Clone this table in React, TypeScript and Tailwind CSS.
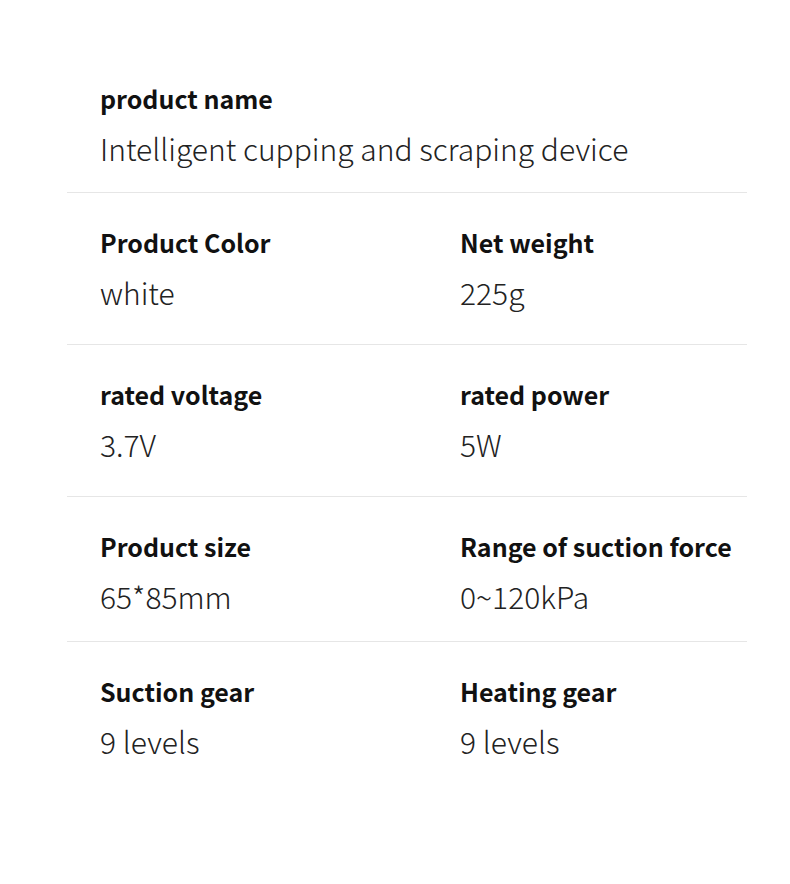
import React from "react";

const font = { fontFamily: '"Noto Sans CJK SC", "Noto Sans", sans-serif' };

function Cell({ label, value }: { label: string; value: string }) {
  return (
    <div className="flex flex-col">
      <div className="text-[25px] font-bold leading-[34px] text-[#111]">{label}</div>
      <div className="mt-[16px] text-[30px] font-light leading-[34px] text-[#222]">{value}</div>
    </div>
  );
}

export default function App() {
  const rows: { r: [string, string][]; pb: string }[] = [
    { r: [["Product Color", "white"], ["Net weight", "225g"]], pb: "pb-[35px]" },
    { r: [["rated voltage", "3.7V"], ["rated power", "5W"]], pb: "pb-[35px]" },
    { r: [["Product size", "65*85mm"], ["Range of suction force", "0~120kPa"]], pb: "pb-[28px]" },
  ];
  return (
    <div className="h-[884px] w-[790px] bg-white" style={font}>
      <div className="ml-[67px] w-[680px] pt-[81px]">
        <div className="border-b border-[#e6e6e6] pl-[33px] pb-[27px]">
          <Cell label="product name" value="Intelligent cupping and scraping device" />
        </div>
        {rows.map((row, i) => (
          <div
            key={i}
            className={`grid grid-cols-[360px_1fr] border-b border-[#e6e6e6] pl-[33px] pt-[32px] ${row.pb}`}
          >
            <Cell label={row.r[0][0]} value={row.r[0][1]} />
            <Cell label={row.r[1][0]} value={row.r[1][1]} />
          </div>
        ))}
        <div className="grid grid-cols-[360px_1fr] pl-[33px] pt-[32px]">
          <Cell label="Suction gear" value="9 levels" />
          <Cell label="Heating gear" value="9 levels" />
        </div>
      </div>
    </div>
  );
}
